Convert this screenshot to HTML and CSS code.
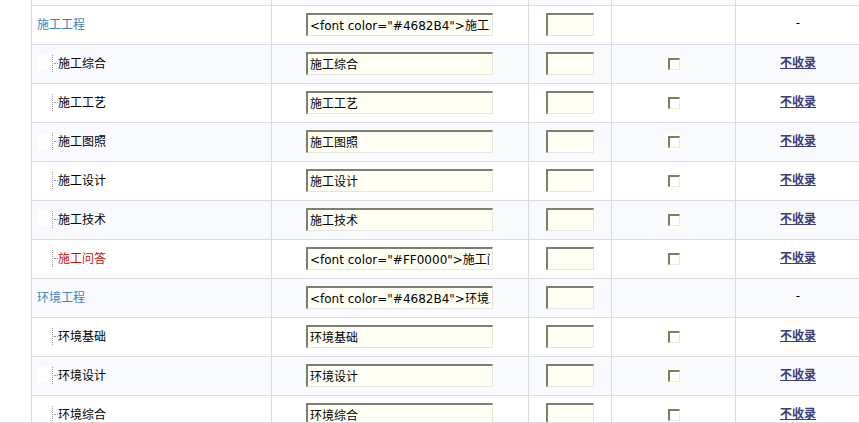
FILE: index.html
```html
<!DOCTYPE html>
<html lang="zh">
<head>
<meta charset="utf-8">
<title>栏目设置</title>
<link rel="stylesheet" href="styles.css">
</head>
<body>
<div class="page">
  <div class="table">
    <div class="row alt">
      <div class="cell c1"></div><div class="cell c2"></div><div class="cell c3"></div><div class="cell c4"></div><div class="cell c5"></div>
    </div>

    <div class="row">
      <div class="cell c1"><span class="parent">施工工程</span></div>
      <div class="cell c2"><input class="txt" type="text" value='&lt;font color="#4682B4"&gt;施工工程&lt;/font&gt;'></div>
      <div class="cell c3"><input class="num" type="text" value=""></div>
      <div class="cell c4"></div>
      <div class="cell c5"><span class="dash">-</span></div>
    </div>

    <div class="row alt">
      <div class="cell c1"><span class="spacer"></span><span class="tline"></span><span class="child">施工综合</span></div>
      <div class="cell c2"><input class="txt" type="text" value="施工综合"></div>
      <div class="cell c3"><input class="num" type="text" value=""></div>
      <div class="cell c4"><span class="chk"><span class="box"></span></span></div>
      <div class="cell c5"><a class="lnk" href="#">不收录</a></div>
    </div>

    <div class="row">
      <div class="cell c1"><span class="spacer"></span><span class="tline"></span><span class="child">施工工艺</span></div>
      <div class="cell c2"><input class="txt" type="text" value="施工工艺"></div>
      <div class="cell c3"><input class="num" type="text" value=""></div>
      <div class="cell c4"><span class="chk"><span class="box"></span></span></div>
      <div class="cell c5"><a class="lnk" href="#">不收录</a></div>
    </div>

    <div class="row alt">
      <div class="cell c1"><span class="spacer"></span><span class="tline"></span><span class="child">施工图照</span></div>
      <div class="cell c2"><input class="txt" type="text" value="施工图照"></div>
      <div class="cell c3"><input class="num" type="text" value=""></div>
      <div class="cell c4"><span class="chk"><span class="box"></span></span></div>
      <div class="cell c5"><a class="lnk" href="#">不收录</a></div>
    </div>

    <div class="row">
      <div class="cell c1"><span class="spacer"></span><span class="tline"></span><span class="child">施工设计</span></div>
      <div class="cell c2"><input class="txt" type="text" value="施工设计"></div>
      <div class="cell c3"><input class="num" type="text" value=""></div>
      <div class="cell c4"><span class="chk"><span class="box"></span></span></div>
      <div class="cell c5"><a class="lnk" href="#">不收录</a></div>
    </div>

    <div class="row alt">
      <div class="cell c1"><span class="spacer"></span><span class="tline"></span><span class="child">施工技术</span></div>
      <div class="cell c2"><input class="txt" type="text" value="施工技术"></div>
      <div class="cell c3"><input class="num" type="text" value=""></div>
      <div class="cell c4"><span class="chk"><span class="box"></span></span></div>
      <div class="cell c5"><a class="lnk" href="#">不收录</a></div>
    </div>

    <div class="row">
      <div class="cell c1"><span class="spacer"></span><span class="tline"></span><span class="child red">施工问答</span></div>
      <div class="cell c2"><input class="txt" type="text" value='&lt;font color="#FF0000"&gt;施工问答&lt;/font&gt;'></div>
      <div class="cell c3"><input class="num" type="text" value=""></div>
      <div class="cell c4"><span class="chk"><span class="box"></span></span></div>
      <div class="cell c5"><a class="lnk" href="#">不收录</a></div>
    </div>

    <div class="row alt">
      <div class="cell c1"><span class="parent">环境工程</span></div>
      <div class="cell c2"><input class="txt" type="text" value='&lt;font color="#4682B4"&gt;环境工程&lt;/font&gt;'></div>
      <div class="cell c3"><input class="num" type="text" value=""></div>
      <div class="cell c4"></div>
      <div class="cell c5"><span class="dash">-</span></div>
    </div>

    <div class="row">
      <div class="cell c1"><span class="spacer"></span><span class="tline"></span><span class="child">环境基础</span></div>
      <div class="cell c2"><input class="txt" type="text" value="环境基础"></div>
      <div class="cell c3"><input class="num" type="text" value=""></div>
      <div class="cell c4"><span class="chk"><span class="box"></span></span></div>
      <div class="cell c5"><a class="lnk" href="#">不收录</a></div>
    </div>

    <div class="row alt">
      <div class="cell c1"><span class="spacer"></span><span class="tline"></span><span class="child">环境设计</span></div>
      <div class="cell c2"><input class="txt" type="text" value="环境设计"></div>
      <div class="cell c3"><input class="num" type="text" value=""></div>
      <div class="cell c4"><span class="chk"><span class="box"></span></span></div>
      <div class="cell c5"><a class="lnk" href="#">不收录</a></div>
    </div>

    <div class="row">
      <div class="cell c1"><span class="spacer"></span><span class="tline"></span><span class="child">环境综合</span></div>
      <div class="cell c2"><input class="txt" type="text" value="环境综合"></div>
      <div class="cell c3"><input class="num" type="text" value=""></div>
      <div class="cell c4"><span class="chk"><span class="box"></span></span></div>
      <div class="cell c5"><a class="lnk" href="#">不收录</a></div>
    </div>
  </div>
</div>
</body>
</html>
```

FILE: styles.css
```css
html, body {
  margin: 0;
  padding: 0;
  background: #ffffff;
}

body {
  font-family: "DejaVu Sans", "Noto Sans CJK SC", sans-serif;
  font-size: 12px;
  color: #000;
}

.page {
  height: 422px;
  overflow: hidden;
  border-bottom: 1px solid #dcdcdc;
}

.table {
  margin-left: 31px;
  margin-top: -33px;
  border-left: 1px solid #dadde5;
  width: 829px;
}

.row {
  display: grid;
  grid-template-columns: 240px 257px 83px 124px 125px;
  height: 39px;
  background: #ffffff;
}

.row.alt {
  background: #f8fafe;
}

.cell {
  box-sizing: border-box;
  border-right: 1px solid #dadde5;
  border-bottom: 1px solid #dadde5;
  display: flex;
  align-items: center;
  justify-content: center;
}

.cell.c1 {
  justify-content: flex-start;
  padding-left: 5px;
  padding-bottom: 2px;
}

.cell.c2 {
  padding-bottom: 1px;
  padding-right: 1px;
}

.cell.c3 {
  padding-bottom: 1px;
}

.cell.c4 {
  padding-bottom: 1px;
}

.cell.c5 {
  padding-bottom: 4px;
}

.parent {
  font-family: "Noto Sans CJK SC", sans-serif;
  color: #4682b4;
  font-size: 12px;
  line-height: 14px;
}

.spacer {
  display: inline-block;
  width: 14px;
  height: 16px;
  margin-left: 1px;
  background: #ffffff;
}

.tline {
  display: inline-block;
  position: relative;
  width: 5px;
  height: 17px;
  border-left: 1px dotted #9a9a9a;
}

.tline::after {
  content: "";
  position: absolute;
  left: 1px;
  top: 8px;
  width: 4px;
  border-top: 1px dotted #9a9a9a;
}

.child {
  font-family: "Noto Sans CJK SC", sans-serif;
  font-size: 12px;
  line-height: 14px;
  color: #000;
}

.child.red {
  color: #cc1111;
}

.txt,
.num {
  box-sizing: border-box;
  height: 23px;
  margin: 0;
  padding: 0 2px 2px 2px;
  background: #fffff4;
  border-top: 2px solid #7e7e70;
  border-left: 2px solid #7e7e70;
  border-right: 1px solid #e6e6dc;
  border-bottom: 1px solid #e6e6dc;
  font-family: "DejaVu Sans", "Noto Sans CJK SC", sans-serif;
  font-size: 12px;
  color: #000;
  outline: none;
}

.txt {
  width: 187px;
}

.num {
  width: 48px;
}

.chk {
  display: inline-flex;
  align-items: center;
  justify-content: center;
  width: 15px;
  height: 16px;
  background: #fffff0;
}

.box {
  box-sizing: border-box;
  width: 12px;
  height: 12px;
  background: #ffffff;
  border-top: 2px solid #7c7c6c;
  border-left: 2px solid #7c7c6c;
  border-right: 1px solid #e8e8e0;
  border-bottom: 1px solid #e8e8e0;
}

.lnk {
  font-family: "Noto Sans CJK SC", sans-serif;
  font-weight: bold;
  font-size: 12px;
  line-height: 14px;
  color: #3c3c78;
  text-decoration: underline;
}

.dash {
  font-size: 12px;
  line-height: 14px;
  color: #000;
}
```
